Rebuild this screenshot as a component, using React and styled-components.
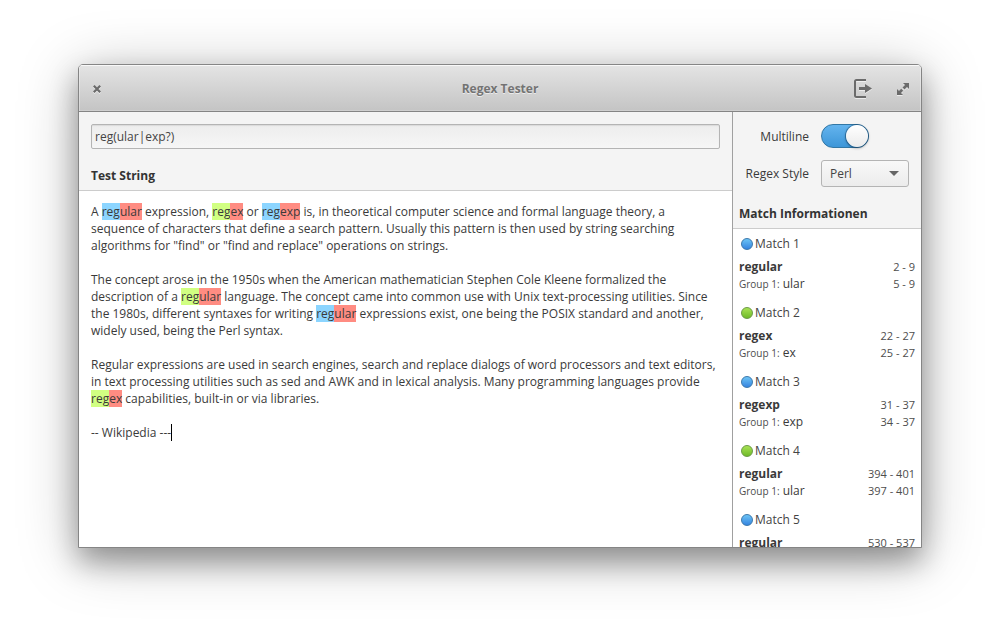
import React, { useState } from "react";
import styled, { createGlobalStyle, css } from "styled-components";

const GlobalStyle = createGlobalStyle`
  *, *::before, *::after { box-sizing: border-box; }
  body {
    margin: 0;
    background: #fff;
    color: #3a3a3a;
    font-family: "Open Sans", "Noto Sans", sans-serif;
    font-size: 12px;
    line-height: 17px;
  }
  h1, h2, h3, p, ul { margin: 0; padding: 0; font-size: 12px; }
`;

const Desktop = styled.div`
  display: flex;
  height: 100vh;
  padding: 64px 78px 92px;
`;

const Window = styled.main`
  flex: 1;
  min-width: 0;
  display: flex;
  flex-direction: column;
  overflow: hidden;
  border: 1px solid #858585;
  border-radius: 5px 5px 0 0;
  background: #f4f4f4;
  box-shadow: 0 14px 28px rgba(0, 0, 0, 0.32), 0 8px 60px rgba(0, 0, 0, 0.27);
`;

const TitleBar = styled.header`
  flex: none;
  display: grid;
  grid-template-columns: 1fr auto 1fr;
  align-items: center;
  height: 47px;
  padding: 0 9px;
  border-bottom: 1px solid #858585;
  background: linear-gradient(#e4e4e4, #c4c4c4);
  box-shadow: inset 0 1px #f8f8f8, inset 1px 0 rgba(255, 255, 255, 0.3),
    inset -1px 0 rgba(255, 255, 255, 0.3), inset 0 -1px #cfcfcf;
`;

const WindowTitle = styled.h1`
  color: #737373;
  font-weight: 700;
  text-shadow: 0 1px rgba(255, 255, 255, 0.6);
`;

const BarActions = styled.div`
  display: flex;
  justify-content: ${(p) => (p.$end ? "flex-end" : "flex-start")};
  gap: 19px;
`;

const IconButton = styled.button`
  display: grid;
  place-items: center;
  width: ${(p) => p.$size}px;
  height: 24px;
  padding: 2px 0 0;
  border: 0;
  background: none;
  color: #6b6b6b;

  svg {
    display: block;
    filter: drop-shadow(0 1px 0 rgba(255, 255, 255, 0.6));
  }
`;

const Content = styled.div`
  flex: 1;
  min-height: 0;
  display: flex;
`;

const Editor = styled.section`
  flex: 1;
  min-width: 0;
  display: flex;
  flex-direction: column;
`;

const PatternRow = styled.div`
  padding: 12px 12px 0;
`;

const PatternInput = styled.input`
  display: block;
  width: 100%;
  height: 25px;
  padding: 0 3px;
  border: 1px solid #b4b4b4;
  border-radius: 2px;
  outline: none;
  background: linear-gradient(#ededed, #f6f6f6);
  box-shadow: inset 0 1px 1px rgba(0, 0, 0, 0.08);
  color: #444;
  font: inherit;
`;

const SectionTitle = styled.h2`
  padding: 18px ${(p) => p.$inset}px 6px;
  border-bottom: 1px solid #ccc;
  color: #333;
  font-weight: 700;
`;

const TestString = styled.div`
  flex: 1;
  overflow: auto;
  padding: 12px;
  outline: none;
  background: #fff;
  white-space: pre-wrap;
`;

const tones = { blue: "#8cd5ff", green: "#d1ff82", red: "#ff8c82" };

const Highlight = styled.mark`
  background: ${(p) => tones[p.$tone]};
  color: inherit;
`;

const Caret = styled.span`
  display: inline-block;
  width: 1px;
  height: 17px;
  vertical-align: top;
  background: #000;
`;

const Sidebar = styled.aside`
  flex: none;
  width: 189px;
  display: flex;
  flex-direction: column;
  border-left: 1px solid #a0a0a0;
`;

const Options = styled.form`
  display: grid;
  grid-template-columns: 1fr 88px;
  align-items: center;
  gap: 12px;
  padding: 12px 12px 0;
`;

const OptionLabel = styled.label`
  text-align: right;
  white-space: nowrap;
`;

const Switch = styled.input`
  appearance: none;
  display: flex;
  align-items: center;
  justify-content: ${(p) => (p.checked ? "flex-end" : "flex-start")};
  width: 48px;
  height: 24px;
  margin: 0;
  border: 1px solid ${(p) => (p.checked ? "#3277a5" : "#aaa")};
  border-radius: 12px;
  background: ${(p) =>
    p.checked ? "linear-gradient(#64b4ee, #3d96d8)" : "linear-gradient(#ddd, #eee)"};

  &::after {
    content: "";
    width: 22px;
    height: 22px;
    border-radius: 50%;
    background: linear-gradient(#fff, #ebebeb);
    box-shadow: 0 0 0 1px rgba(20, 70, 110, 0.5), 0 1px 3px rgba(0, 0, 0, 0.4);
  }
`;

const SelectBox = styled.div`
  display: grid;
  align-items: center;
  color: #666;

  & > * { grid-area: 1 / 1; }

  svg {
    justify-self: end;
    margin-right: 10px;
    pointer-events: none;
  }
`;

const Select = styled.select`
  appearance: none;
  width: 100%;
  height: 27px;
  padding: 0 8px;
  border: 1px solid #b4b4b4;
  border-radius: 3px;
  background: linear-gradient(#f8f8f8, #ececec);
  color: #444;
  font: inherit;
`;

const MatchList = styled.ul`
  flex: 1;
  min-height: 0;
  overflow-y: auto;
  scrollbar-width: none;
  padding: 6px;
  background: #fff;
  list-style: none;
`;

const MatchItem = styled.li`
  padding-bottom: 12px;
`;

const MatchHeading = styled.h3`
  display: flex;
  align-items: center;
  gap: 2px;
  margin-bottom: 6px;
  padding-left: 2px;
  color: #444;
  font-weight: 400;
`;

const dots = {
  blue: css`
    border-color: #3a78ac;
    background: linear-gradient(#6cc4f5, #3584e0);
  `,
  green: css`
    border-color: #6b9a45;
    background: linear-gradient(#a8e254, #6fba28);
  `,
};

const Dot = styled.span`
  width: 12px;
  height: 12px;
  border: 1px solid;
  border-radius: 50%;
  ${(p) => dots[p.$tone]}
`;

const MatchRow = styled.div`
  display: flex;
  justify-content: space-between;
  height: 17px;
`;

const MatchedText = styled.strong`
  font-weight: 700;
`;

const Small = styled.span`
  color: #4d4d4d;
  font-size: ${(p) => (p.$range ? 11 : 10)}px;
`;

const matches = [
  { text: "regular", range: "2 - 9", group: "ular", groupRange: "5 - 9" },
  { text: "regex", range: "22 - 27", group: "ex", groupRange: "25 - 27" },
  { text: "regexp", range: "31 - 37", group: "exp", groupRange: "34 - 37" },
  { text: "regular", range: "394 - 401", group: "ular", groupRange: "397 - 401" },
  { text: "regular", range: "530 - 537", group: "ular", groupRange: "533 - 537" },
];

function Match({ tone, group }) {
  return (
    <>
      <Highlight $tone={tone}>reg</Highlight>
      <Highlight $tone="red">{group}</Highlight>
    </>
  );
}

function CloseIcon() {
  return (
    <svg width="8" height="8" viewBox="0 0 8 8" fill="none" stroke="currentColor" strokeWidth="2.2">
      <path d="M.8.8l6.4 6.4M7.2.8L.8 7.2" />
    </svg>
  );
}

function ExportIcon() {
  return (
    <svg width="20" height="20" viewBox="0 0 20 20" fill="none">
      <path d="M13 1H3.500Q2 1 2 2.500V16.500Q2 18 3.500 18H13" stroke="currentColor" strokeWidth="2" />
      <path d="M6 8h6V5l7 4.500-7 4.500v-3H6z" fill="currentColor" />
    </svg>
  );
}

function ExpandIcon() {
  return (
    <svg width="12" height="12" viewBox="0 0 12 12" fill="currentColor">
      <path d="M6 0h6v6L10 4 7.500 6.500 5.500 4.500 8 2z" />
      <path d="M6 12H0V6l2 2 2.200-2.200 2 2L4 10z" />
    </svg>
  );
}

export default function App() {
  const [pattern, setPattern] = useState("reg(ular|exp?)");
  const [multiline, setMultiline] = useState(true);

  return (
    <Desktop>
      <GlobalStyle />
      <Window>
        <TitleBar>
          <BarActions>
            <IconButton type="button" $size={18} aria-label="Close"><CloseIcon /></IconButton>
          </BarActions>
          <WindowTitle>Regex Tester</WindowTitle>
          <BarActions $end>
            <IconButton type="button" $size={24} aria-label="Export"><ExportIcon /></IconButton>
            <IconButton type="button" $size={18} aria-label="Maximize"><ExpandIcon /></IconButton>
          </BarActions>
        </TitleBar>
        <Content>
          <Editor>
            <PatternRow>
              <PatternInput
                aria-label="Regular expression"
                value={pattern}
                onChange={(e) => setPattern(e.target.value)}
              />
            </PatternRow>
            <SectionTitle $inset={12} id="test-string">Test String</SectionTitle>
            <TestString
              role="textbox"
              aria-multiline="true"
              aria-labelledby="test-string"
              contentEditable
              suppressContentEditableWarning
              spellCheck={false}
            >
              <p>
                A <Match tone="blue" group="ular" /> expression, <Match tone="green" group="ex" /> or{" "}
                <Match tone="blue" group="exp" /> is, in theoretical computer science and formal language
                theory, a sequence of characters that define a search pattern. Usually this pattern is then
                used by string searching algorithms for "find" or "find and replace" operations on strings.
              </p>
              <br />
              <p>
                The concept arose in the 1950s when the American mathematician Stephen Cole Kleene
                formalized the description of a <Match tone="green" group="ular" /> language. The concept
                came into common use with Unix text-processing utilities. Since the 1980s, different
                syntaxes for writing <Match tone="blue" group="ular" /> expressions exist, one being the
                POSIX standard and another, widely used, being the Perl syntax.
              </p>
              <br />
              <p>
                Regular expressions are used in search engines, search and replace dialogs of word
                processors and text editors, in text processing utilities such as sed and AWK and in lexical
                analysis. Many programming languages provide <Match tone="green" group="ex" />{" "}
                capabilities, built-in or via libraries.
              </p>
              <br />
              <p>-- Wikipedia ---<Caret /></p>
            </TestString>
          </Editor>
          <Sidebar>
            <Options>
              <OptionLabel htmlFor="multiline">Multiline</OptionLabel>
              <Switch
                id="multiline"
                type="checkbox"
                role="switch"
                checked={multiline}
                onChange={(e) => setMultiline(e.target.checked)}
              />
              <OptionLabel htmlFor="style">Regex Style</OptionLabel>
              <SelectBox>
                <Select id="style" defaultValue="Perl">
                  <option>Perl</option>
                  <option>JavaScript</option>
                </Select>
                <svg width="10" height="5" viewBox="0 0 10 5" fill="currentColor">
                  <path d="M0 0h10L5 5z" />
                </svg>
              </SelectBox>
            </Options>
            <SectionTitle $inset={6}>Match Informationen</SectionTitle>
            <MatchList>
              {matches.map((m, i) => (
                <MatchItem key={m.range}>
                  <MatchHeading>
                    <Dot $tone={i % 2 ? "green" : "blue"} />
                    Match {i + 1}
                  </MatchHeading>
                  <MatchRow>
                    <MatchedText>{m.text}</MatchedText>
                    <Small $range>{m.range}</Small>
                  </MatchRow>
                  <MatchRow>
                    <span><Small>Group 1:</Small> {m.group}</span>
                    <Small $range>{m.groupRange}</Small>
                  </MatchRow>
                </MatchItem>
              ))}
            </MatchList>
          </Sidebar>
        </Content>
      </Window>
    </Desktop>
  );
}
